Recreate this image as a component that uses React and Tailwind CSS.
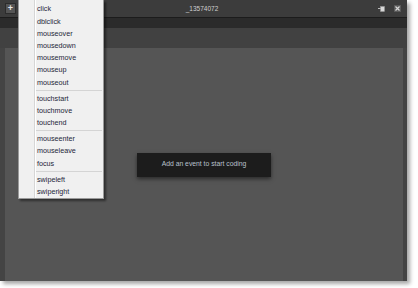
const groups = [
  ['click', 'dblclick', 'mouseover', 'mousedown', 'mousemove', 'mouseup', 'mouseout'],
  ['touchstart', 'touchmove', 'touchend'],
  ['mouseenter', 'mouseleave', 'focus'],
  ['swipeleft', 'swiperight'],
];

function EventMenu() {
  return (
    <div className="absolute left-[18px] top-0 w-[86px] h-[199px] bg-[#f0f0f0] border border-t-0 border-[#9a9a9a] shadow-[2px_2px_2px_rgba(0,0,0,0.45)] pt-[2.9px]">
      {/* gutter line */}
      <div className="absolute left-[15px] top-0 bottom-0 w-px bg-[#d6d6d6]" />
      <div className="absolute left-[16px] top-0 bottom-0 w-px bg-white" />
      {groups.map((g, gi) => (
        <div key={gi}>
          {gi > 0 && (
            <div className="ml-[16px] mr-[1px] my-[1.5px] h-px bg-[#d4d4d4]" />
          )}
          {g.map((name) => (
            <div
              key={name}
              className="relative h-[12.2px] pl-[18px] flex items-center text-[7.2px] leading-none text-[#241f38]"
            >
              {name}
            </div>
          ))}
        </div>
      ))}
    </div>
  );
}

export default function App() {
  return (
    <div className="relative w-[418px] h-[288px] bg-white overflow-hidden font-['Liberation_Sans',Arial,sans-serif]">
      <div className="w-[407px] h-[281px] bg-[#444444] flex flex-col shadow-[3px_3px_4px_rgba(0,0,0,0.35)]">
        {/* title bar */}
        <div className="relative h-[17px] bg-[#3c3c3c] flex items-center px-[5px]">
          <div className="w-[11px] h-[11px] bg-[#555555] border border-[#2c2c2c] flex items-center justify-center text-[#e8e8e8] text-[9px] leading-none font-bold">
            +
          </div>
          <div className="flex-1 text-center text-[6.5px] text-[#cfcfcf] pl-[10px]">
            _13574072
          </div>
          <div className="flex items-center gap-[9px] pr-[1px]">
            <svg width="7" height="6" viewBox="0 0 7 6">
              <rect x="0" y="2" width="3" height="1" fill="#bbbbbb" />
              <rect x="2.5" y="0.5" width="4" height="5" fill="#d8d8d8" stroke="#999999" strokeWidth="0.5" />
            </svg>
            <svg width="7" height="7" viewBox="0 0 7 7">
              <rect x="0" y="0" width="7" height="7" fill="#5a5a5a" />
              <path d="M1.5 1.5 L5.5 5.5 M5.5 1.5 L1.5 5.5" stroke="#d8d8d8" strokeWidth="1.2" />
            </svg>
          </div>
        </div>
        {/* toolbar strip */}
        <div className="h-[11px] bg-[#2b2b2b] border-t border-[#1c1c1c]" />
        {/* header area above canvas */}
        <div className="h-[20px] bg-[#414141]" />
        {/* canvas */}
        <div className="flex-1 ml-[5px] mr-[4px] bg-[#555555] flex items-center justify-center">
          <div className="w-[134px] h-[24px] bg-[#1c1c1c] shadow-[0_2px_4px_rgba(0,0,0,0.5)] flex items-center justify-center text-[6.8px] text-[#b9c1cc]">
            Add an event to start coding
          </div>
        </div>
      </div>
      <EventMenu />
    </div>
  );
}
